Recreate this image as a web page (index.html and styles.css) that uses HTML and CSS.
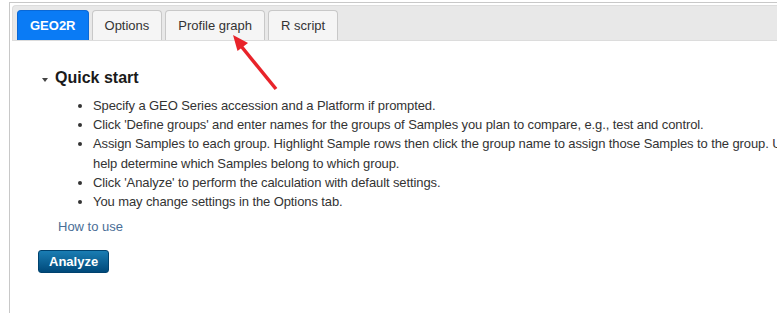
FILE: index.html
```html
<!DOCTYPE html>
<html lang="en">
<head>
    <meta charset="UTF-8">
    <meta name="viewport" content="width=device-width, initial-scale=1.0">
    <title>GEO2R</title>
    <link rel="stylesheet" href="styles.css">
</head>
<body>
    <div class="panel">
        <div class="tabs">
            <div class="tab active">GEO2R</div>
            <div class="tab">Options</div>
            <div class="tab">Profile graph</div>
            <div class="tab">R script</div>
        </div>

        <div class="content">
            <h2 class="section-title"><span class="caret"></span>Quick start</h2>
            <ul class="steps">
                <li>Specify a GEO Series accession and a Platform if prompted.</li>
                <li>Click 'Define groups' and enter names for the groups of Samples you plan to compare, e.g., test and control.</li>
                <li>Assign Samples to each group. Highlight Sample rows then click the group name to assign those Samples to the group. Use the Sample values column to help determine which Samples belong to which group.</li>
                <li>Click 'Analyze' to perform the calculation with default settings.</li>
                <li>You may change settings in the Options tab.</li>
            </ul>
            <p class="how-to"><a href="#">How to use</a></p>
            <button class="analyze-btn">Analyze</button>
        </div>
    </div>

    <!-- annotation arrow pointing at the Profile graph tab -->
    <svg class="arrow" width="777" height="313" viewBox="0 0 777 313">
        <line x1="276" y1="89" x2="241" y2="46" stroke="#e8232a" stroke-width="3.5"/>
        <polygon points="233,35 248,43 237.5,51" fill="#e8232a"/>
    </svg>
</body>
</html>
```

FILE: styles.css
```css
html, body {
    overflow: hidden;
}

body {
    margin: 0;
    font-family: 'Liberation Sans', Arial, sans-serif;
    font-size: 13px;
    color: #333;
    background: #fff;
}

.panel {
    box-sizing: border-box;
    height: 311px;
    margin: 2px 0 0 9px;
    padding: 2px 0 0 2px;
    border-top: 1px solid #c8c8c8;
    border-left: 1px solid #c8c8c8;
}

.tabs {
    display: flex;
    gap: 3px;
    padding: 4px 4px 0;
    background: #e8e8e8;
    border: 1px solid #dcdcdc;
    border-right: none;
    border-radius: 4px 0 0 0;
}

.tab {
    box-sizing: border-box;
    height: 30px;
    line-height: 29px;
    padding: 0 12px;
    background: #f5f5f5;
    border: 1px solid #c8c8c8;
    border-bottom: none;
    border-radius: 4px 4px 0 0;
    color: #333;
    white-space: nowrap;
}

.tab.active {
    background: #0a7bf5;
    border-color: #0a68d6;
    color: #fff;
    font-weight: bold;
}

.content {
    padding-left: 26px;
}

.section-title {
    margin: 27px 0 0;
    padding-left: 4px;
    font-size: 16px;
    line-height: 20px;
    color: #1a1a1a;
}

.caret {
    display: inline-block;
    width: 0;
    height: 0;
    border-left: 3px solid transparent;
    border-right: 3px solid transparent;
    border-top: 4px solid #444;
    margin: 0 7px 1px 0;
}

.steps {
    width: 875px;
    margin: 8px 0 0;
    padding-left: 55px;
    line-height: 19.2px;
    letter-spacing: -0.1px;
}

.how-to {
    margin: 8px 0 0 20px;
    line-height: 16px;
}

.how-to a {
    color: #4a6e96;
    text-decoration: none;
}

.analyze-btn {
    margin-top: 15px;
    height: 23px;
    padding: 0 10px;
    font-family: inherit;
    font-size: 13px;
    font-weight: bold;
    color: #fff;
    background: linear-gradient(#1a7db3, #00497a);
    border: 1px solid #00426e;
    border-radius: 3px;
    cursor: pointer;
}

.arrow {
    position: absolute;
    left: 0;
    top: 0;
    pointer-events: none;
}
```
